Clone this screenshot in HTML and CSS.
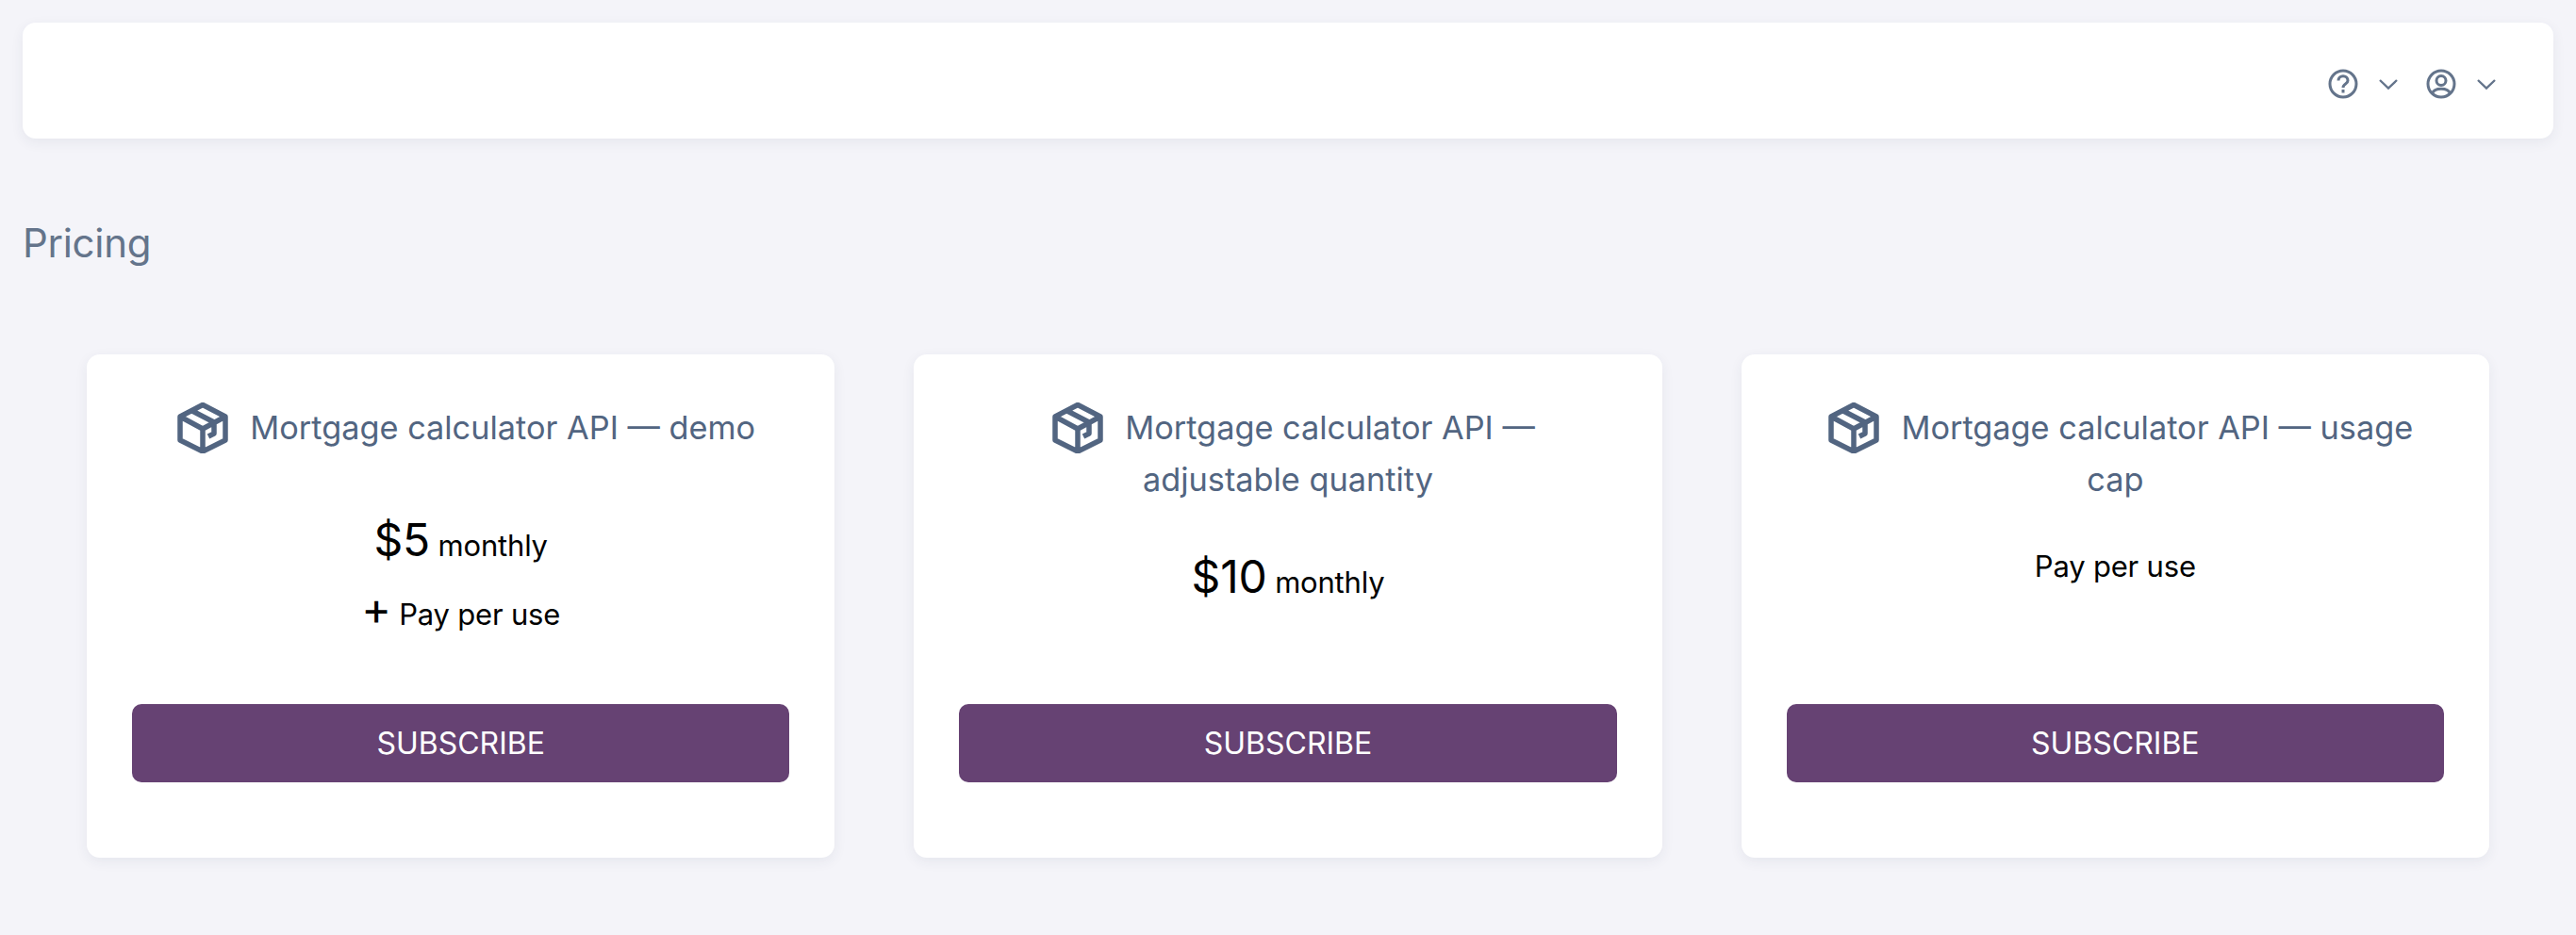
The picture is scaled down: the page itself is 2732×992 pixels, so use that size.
FILE: index.html
```html
<!doctype html>
<html lang="en">

<head>
    <title>Pricing</title>
    <link rel="stylesheet" href="styles.css">
</head>

<body>
    <svg class="defs" width="0" height="0">
        <symbol id="box" viewBox="0 0 54 54">
            <path d="M27 2.5 L51 15 V40 L27 52 L3 40 V15 Z M3 15 L27 28 L51 15 M27 28 V52 M15 8.5 L39 21 V33 L33 36" fill="none" stroke="currentColor" stroke-width="5.5" stroke-linejoin="round"/>
        </symbol>
        <symbol id="chevron" viewBox="0 0 20 20">
            <path d="M1 6 L10 14.5 L19 6" fill="none" stroke="currentColor" stroke-width="2.4"/>
        </symbol>
    </svg>

    <header class="topbar">
        <div class="topbar-item">
            <svg class="topbar-icon" viewBox="0 0 32 32" fill="none" stroke="currentColor" stroke-width="3">
                <circle cx="16" cy="16" r="14"/>
                <path d="M11 12.5 C11 6 21 6 21 12.5 C21 16.5 16 15.5 16 20"/>
                <path d="M16 22 V25.5"/>
            </svg>
            <svg class="chevron"><use href="#chevron"/></svg>
        </div>
        <div class="topbar-item">
            <svg class="topbar-icon" viewBox="0 0 32 32" fill="none" stroke="currentColor" stroke-width="3">
                <circle cx="16" cy="16" r="14"/>
                <circle cx="16" cy="12.5" r="5"/>
                <path d="M6.5 26 C9 19.5 23 19.5 25.5 26"/>
            </svg>
            <svg class="chevron"><use href="#chevron"/></svg>
        </div>
    </header>

    <h1 class="page-title">Pricing</h1>

    <main class="plans">
        <section class="plan plan-demo">
            <h2 class="plan-title"><svg class="plan-icon"><use href="#box"/></svg>Mortgage calculator API — demo</h2>
            <div class="plan-price">
                <p class="price"><span class="amount">$5</span> monthly</p>
                <p class="extra"><span class="plus">+</span> Pay per use</p>
            </div>
            <button class="subscribe">SUBSCRIBE</button>
        </section>

        <section class="plan plan-quantity">
            <h2 class="plan-title"><svg class="plan-icon"><use href="#box"/></svg>Mortgage calculator API — adjustable quantity</h2>
            <div class="plan-price">
                <p class="price"><span class="amount">$10</span> monthly</p>
            </div>
            <button class="subscribe">SUBSCRIBE</button>
        </section>

        <section class="plan plan-cap">
            <h2 class="plan-title"><svg class="plan-icon"><use href="#box"/></svg>Mortgage calculator API — usage cap</h2>
            <div class="plan-price">
                <p class="extra">Pay per use</p>
            </div>
            <button class="subscribe">SUBSCRIBE</button>
        </section>
    </main>
</body>

</html>
```

FILE: styles.css
```css
body {
    font-family: Inter, "Liberation Sans", sans-serif;
    margin: 0;
    padding: 24px;
    background-color: #f4f4f9;
    color: #000;
}

.defs {
    display: block;
    height: 0;
}

.topbar {
    display: flex;
    justify-content: flex-end;
    align-items: center;
    gap: 30px;
    height: 123px;
    padding: 6px 61px 0 0;
    box-sizing: border-box;
    background-color: white;
    border-radius: 14px;
    box-shadow: 0px 4px 14px rgba(40, 50, 80, 0.07);
    color: #64748b;
}

.topbar-item {
    display: flex;
    align-items: center;
    gap: 22px;
}

.topbar-icon {
    width: 32px;
    height: 32px;
}

.chevron {
    width: 20px;
    height: 20px;
}

.page-title {
    margin: 85px 0 0;
    font-size: 42px;
    line-height: 52px;
    font-weight: 400;
    letter-spacing: -0.3px;
    color: #64748b;
}

.plans {
    display: grid;
    grid-template-columns: repeat(3, 1fr);
    gap: 84px;
    margin: 92px 68px 0;
}

.plan {
    display: flex;
    flex-direction: column;
    height: 534px;
    box-sizing: border-box;
    padding: 50px 48px 80px;
    background-color: white;
    border-radius: 14px;
    box-shadow: 0px 4px 14px rgba(40, 50, 80, 0.07);
}

.plan-title {
    margin: 0;
    padding: 0 24px;
    font-size: 34.3px;
    line-height: 55px;
    font-weight: 400;
    text-align: center;
    color: #526581;
}

.plan-icon {
    width: 54px;
    height: 54px;
    margin: 0 23px 0 12px;
    vertical-align: -15px;
}

.plan-price {
    flex: 1;
    text-align: center;
}

.plan-demo .plan-price {
    margin-top: 56px;
}

.plan-quantity .plan-price {
    margin-top: 40px;
}

.plan-cap .plan-price {
    margin-top: 29px;
}

.price,
.extra {
    margin: 0;
    font-size: 31px;
    line-height: 72px;
    letter-spacing: -0.2px;
}

.price + .extra {
    margin-top: 1px;
}

.amount {
    font-size: 48px;
}

.plus {
    font-size: 48px;
    line-height: 40px;
}

.subscribe {
    height: 83px;
    flex: none;
    background-color: #664273;
    color: white;
    font-family: inherit;
    font-size: 32px;
    border: none;
    border-radius: 10px;
    cursor: pointer;
}
```
